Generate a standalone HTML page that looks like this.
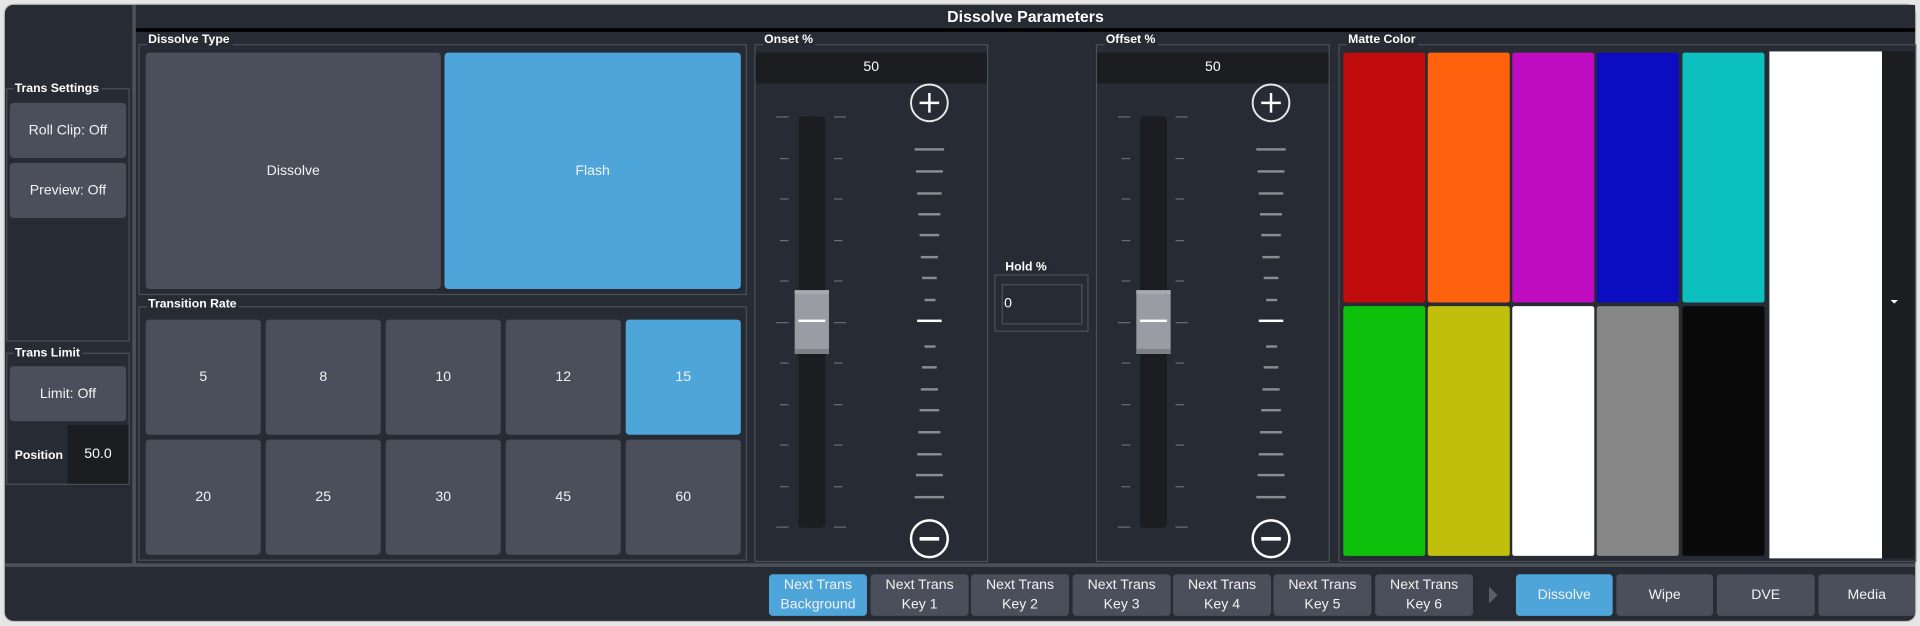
<!DOCTYPE html>
<html><head><meta charset="utf-8"><style>
*{margin:0;padding:0;box-sizing:border-box}
html,body{width:1920px;height:626px;overflow:hidden;background:#e6e6e6}
#s{position:absolute;left:0;top:0;width:1568px;height:511px;transform:scale(1.22449);transform-origin:0 0;font-family:"Liberation Sans",sans-serif;color:#fff}
.a{position:absolute}
.frame{left:3px;top:3px;width:1562px;height:505px;background:#272b33;border-radius:8px;border:1px solid #bdbdbd}
.b{position:absolute;background:#4b4f5b;border-radius:3px;display:flex;align-items:center;justify-content:center;font-size:11.5px;text-align:center;line-height:16px;color:#f2f2f2}
.bl{background:#4ea5d9}
.g{position:absolute;border:1px solid #4c5057}
.lg{position:absolute;font-size:10px;font-weight:bold;background:#272b33;padding:0 2px 0 1px;line-height:11px}
.dk{position:absolute;background:#1c1d20}
.t{position:absolute;height:1px;background:#6a6d72}
.lt{position:absolute;height:2px;background:#8a8c90}
.sw{position:absolute;border-radius:2px}
</style></head><body><div id="s">
<div class="a frame"></div>
<div class="a" style="left:108px;top:4px;width:3px;height:457px;background:#4c5057"></div>
<div class="a" style="left:111px;top:4px;width:1453px;height:19px;text-align:center;font-size:13px;font-weight:bold;line-height:19px;background:#272b33">Dissolve Parameters</div>
<div class="a" style="left:111px;top:23px;width:1453px;height:3px;background:#000"></div>
<div class="a" style="left:4px;top:460px;width:1560px;height:3px;background:#4c5057"></div>

<div class="g" style="left:5px;top:72px;width:101px;height:207px"></div>
<div class="lg" style="left:11px;top:67px">Trans Settings</div>
<div class="b" style="left:8px;top:84px;width:95px;height:45px">Roll Clip: Off</div>
<div class="b" style="left:8px;top:133px;width:95px;height:45px">Preview: Off</div>
<div class="g" style="left:5px;top:288px;width:101px;height:108px"></div>
<div class="lg" style="left:11px;top:283px">Trans Limit</div>
<div class="b" style="left:8px;top:299px;width:95px;height:45px">Limit: Off</div>
<div class="a" style="left:12px;top:367px;font-size:10px;font-weight:bold">Position</div>
<div class="dk" style="left:55px;top:347px;width:50px;height:48px;font-size:11.5px;text-align:center;line-height:48px">50.0</div>

<div class="g" style="left:113px;top:36px;width:497px;height:205px"></div>
<div class="lg" style="left:120px;top:27px">Dissolve Type</div>
<div class="b" style="left:119px;top:43px;width:241px;height:193px">Dissolve</div>
<div class="b bl" style="left:363px;top:43px;width:242px;height:193px">Flash</div>

<div class="g" style="left:113px;top:250px;width:497px;height:208px"></div>
<div class="lg" style="left:120px;top:243px">Transition Rate</div>
<div class="b" style="left:119px;top:261px;width:94px;height:94px">5</div>
<div class="b" style="left:217px;top:261px;width:94px;height:94px">8</div>
<div class="b" style="left:315px;top:261px;width:94px;height:94px">10</div>
<div class="b" style="left:413px;top:261px;width:94px;height:94px">12</div>
<div class="b bl" style="left:511px;top:261px;width:94px;height:94px">15</div>
<div class="b" style="left:119px;top:359px;width:94px;height:94px">20</div>
<div class="b" style="left:217px;top:359px;width:94px;height:94px">25</div>
<div class="b" style="left:315px;top:359px;width:94px;height:94px">30</div>
<div class="b" style="left:413px;top:359px;width:94px;height:94px">45</div>
<div class="b" style="left:511px;top:359px;width:94px;height:94px">60</div>

<div class="g" style="left:812px;top:224px;width:77px;height:47px"></div>
<div class="lg" style="left:820px;top:213px">Hold %</div>
<div class="a" style="left:818px;top:232px;width:66px;height:33px;border:1px solid #4c5057;font-size:11.5px;line-height:31px;padding-left:1px">0</div>

<div id="sl"></div>

<div class="g" style="left:1093px;top:36px;width:472px;height:423px"></div>
<div class="lg" style="left:1100px;top:27px">Matte Color</div>
<div class="sw" style="left:1097px;top:43px;width:67px;height:204px;background:#c00c0c"></div>
<div class="sw" style="left:1166px;top:43px;width:67px;height:204px;background:#ff620c"></div>
<div class="sw" style="left:1235px;top:43px;width:67px;height:204px;background:#c00cc0"></div>
<div class="sw" style="left:1304px;top:43px;width:67px;height:204px;background:#0c0cc0"></div>
<div class="sw" style="left:1374px;top:43px;width:67px;height:204px;background:#0cc0c0"></div>
<div class="sw" style="left:1097px;top:250px;width:67px;height:204px;background:#0cc00c"></div>
<div class="sw" style="left:1166px;top:250px;width:67px;height:204px;background:#c0c00c"></div>
<div class="sw" style="left:1235px;top:250px;width:67px;height:204px;background:#fff"></div>
<div class="sw" style="left:1304px;top:250px;width:67px;height:204px;background:#868686"></div>
<div class="sw" style="left:1374px;top:250px;width:67px;height:204px;background:#0a0a0a"></div>
<div class="a" style="left:1445px;top:42px;width:92px;height:414px;background:#fff"></div>
<div class="dk" style="left:1537px;top:42px;width:26px;height:414px"></div>
<div class="a" style="left:1544px;top:245px;width:0;height:0;border-left:3px solid transparent;border-right:3px solid transparent;border-top:3px solid #fff"></div>

<div class="b bl" style="left:628px;top:469px;width:80px;height:34px">Next Trans<br>Background</div>
<div class="b" style="left:711px;top:469px;width:80px;height:34px">Next Trans<br>Key 1</div>
<div class="b" style="left:793px;top:469px;width:80px;height:34px">Next Trans<br>Key 2</div>
<div class="b" style="left:876px;top:469px;width:80px;height:34px">Next Trans<br>Key 3</div>
<div class="b" style="left:958px;top:469px;width:80px;height:34px">Next Trans<br>Key 4</div>
<div class="b" style="left:1040px;top:469px;width:80px;height:34px">Next Trans<br>Key 5</div>
<div class="b" style="left:1123px;top:469px;width:80px;height:34px">Next Trans<br>Key 6</div>
<div class="a" style="left:1216px;top:479px;width:0;height:0;border-top:7px solid transparent;border-bottom:7px solid transparent;border-left:7px solid #5a5e66"></div>
<div class="b bl" style="left:1238px;top:469px;width:79px;height:34px">Dissolve</div>
<div class="b" style="left:1320px;top:469px;width:79px;height:34px">Wipe</div>
<div class="b" style="left:1402px;top:469px;width:80px;height:34px">DVE</div>
<div class="b" style="left:1485px;top:469px;width:79px;height:34px">Media</div>
</div>
<script>
var h='';
[[616,'Onset %'],[895,'Offset %']].forEach(function(p){
 var x=p[0];
 h+='<div class="g" style="left:'+x+'px;top:36px;width:191px;height:423px"></div>';
 h+='<div class="lg" style="left:'+(x+7)+'px;top:27px">'+p[1]+'</div>';
 h+='<div class="dk" style="left:'+(x+1)+'px;top:43px;width:189px;height:25px;font-size:11.5px;text-align:center;line-height:25px">50</div>';
 h+='<div class="dk" style="left:'+(x+36)+'px;top:95px;width:22px;height:336px;border-radius:3px"></div>';
 for(var i=0;i<11;i++){var y=Math.round(95+i*33.5);var lng=(i==0||i==5||i==10);
  h+='<div class="t" style="left:'+(x+(lng?18:21))+'px;top:'+y+'px;width:'+(lng?10:7)+'px"></div>';
  h+='<div class="t" style="left:'+(x+65)+'px;top:'+y+'px;width:'+(lng?10:7)+'px"></div>';}
 h+='<div class="a" style="left:'+(x+33)+'px;top:237px;width:28px;height:52px;background:#9a9ca3;border-bottom:4px solid #7d8087;border-top:3px solid #a9abb1"></div>';
 h+='<div class="a" style="left:'+(x+36)+'px;top:261px;width:22px;height:2px;background:#fff"></div>';
 var cx=x+143;
 var L=[[122,24],[140,22],[158,20],[175,18],[192,16],[210,14],[227,12],[245,9],[262,20],[283,9],[300,12],[318,14],[335,16],[353,18],[371,20],[388,22],[406,24]];
 L.forEach(function(l){h+='<div class="lt" style="left:'+(cx-l[1]/2)+'px;top:'+(l[0]-1)+'px;width:'+l[1]+'px;'+(l[0]==262?'background:#fff':'')+'"></div>';});
 h+='<svg class="a" style="left:'+(cx-17)+'px;top:67px" width="34" height="34"><circle cx="17" cy="17" r="15" fill="none" stroke="#e8e8e8" stroke-width="1.6"/><path d="M9 17H25M17 9V25" stroke="#fff" stroke-width="2"/></svg>';
 h+='<svg class="a" style="left:'+(cx-17)+'px;top:423px" width="34" height="34"><circle cx="17" cy="17" r="15" fill="none" stroke="#fff" stroke-width="2"/><path d="M9 17H25" stroke="#fff" stroke-width="3"/></svg>';
});
document.getElementById('sl').outerHTML=h;
</script>
</body></html>
